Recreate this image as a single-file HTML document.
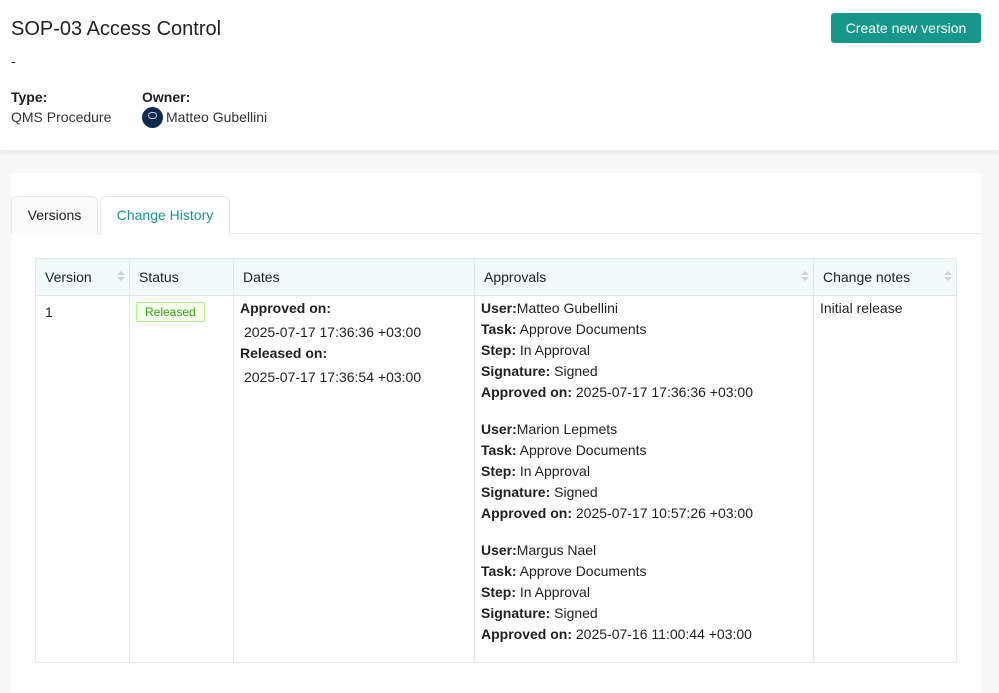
<!DOCTYPE html>
<html><head><style>
*{box-sizing:border-box;margin:0;padding:0}
body{width:999px;height:684px;overflow:hidden;background:#f7f7f7;font-family:"Liberation Sans",sans-serif;color:#1f1f1f;font-size:14px;position:relative}
.hdr{position:absolute;left:0;top:0;width:999px;height:150px;background:#fff;box-shadow:0 2px 6px rgba(0,0,0,.08)}
.abs{position:absolute;white-space:nowrap}
.btn{position:absolute;left:831px;top:13px;width:150px;height:30px;background:#16978a;color:#fff;border-radius:3px;font-size:14px;text-align:center;line-height:30px}
.card{position:absolute;left:11px;top:173px;width:970px;height:520px;background:#fff}
.tabs{position:absolute;left:11px;top:196px;width:970px;height:38px;border-bottom:1px solid #e8e8e8}
.tab{position:absolute;top:0;height:38px;border:1px solid #e8e8e8;border-bottom:none;border-radius:6px 6px 0 0;line-height:37px;font-size:14px;text-align:center}
table{position:absolute;left:35px;top:258px;border-collapse:collapse;font-size:14px}
th{background:#f1f9f9;height:37px;font-weight:normal;text-align:left;padding:0 9px;border:1px solid #e3e8e8;position:relative}
td{vertical-align:top;border:1px solid #e3e8e8;padding:6px 6px 0;height:367px}
.sort{position:absolute;right:8px;top:13px;width:0;height:0}
.sort:before{content:"";position:absolute;left:-4px;top:-1px;border:4px solid transparent;border-bottom:4px solid #cfcfcf;border-top:none}
.sort:after{content:"";position:absolute;left:-4px;top:5px;border:4px solid transparent;border-top:4px solid #cfcfcf;border-bottom:none}
.l{line-height:21px}
.g{margin-bottom:16px}
b{font-weight:bold}
.tag{display:inline-block;border:1px solid #b7eb8f;background:#f6ffed;color:#389e0d;font-size:12px;padding:0 8px;line-height:18px;border-radius:2px}
</style></head><body>
<div class="hdr"></div>
<div class="abs" style="left:11px;top:18px;font-size:20px;color:#222">SOP-03 Access Control</div>
<div class="abs" style="left:11px;top:53px;font-size:14px">-</div>
<div class="abs" style="left:11px;top:89px;font-weight:bold">Type:</div>
<div class="abs" style="left:11px;top:109px;color:#333">QMS Procedure</div>
<div class="abs" style="left:142px;top:89px;font-weight:bold">Owner:</div>
<div class="abs" style="left:142px;top:107px;width:21px;height:21px;border-radius:50%;background:#0f2a4f"><div style="position:absolute;left:6px;top:5px;width:9px;height:7px;border:1px solid #ccd;border-radius:4px"></div></div>
<div class="abs" style="left:166px;top:109px;color:#333">Matteo Gubellini</div>
<div class="btn">Create new version</div>
<div class="card"></div>
<div class="tabs">
<div class="tab" style="left:0;width:87px;background:#fafafa">Versions</div>
<div class="tab" style="left:89px;width:130px;background:#fff;color:#16978a;height:39px">Change History</div>
</div>
<table>
<tr><th style="width:94px">Version<span class="sort"></span></th><th style="width:104px">Status</th><th style="width:241px">Dates</th><th style="width:339px">Approvals<span class="sort"></span></th><th style="width:143px">Change notes<span class="sort"></span></th></tr>
<tr>
<td style="padding:8px 9px 0">1</td>
<td><span class="tag">Released</span></td>
<td class="l" style="padding-top:2px"><b>Approved on:</b><div style="padding:3px 4px 0">2025-07-17 17:36:36 +03:00</div><b>Released on:</b><div style="padding:3px 4px 0">2025-07-17 17:36:54 +03:00</div></td>
<td class="l" style="padding-top:2px">
<div class="g"><b>User:</b>Matteo Gubellini<br><b>Task:</b> Approve Documents<br><b>Step:</b> In Approval<br><b>Signature:</b> Signed<br><b>Approved on:</b> 2025-07-17 17:36:36 +03:00</div>
<div class="g"><b>User:</b>Marion Lepmets<br><b>Task:</b> Approve Documents<br><b>Step:</b> In Approval<br><b>Signature:</b> Signed<br><b>Approved on:</b> 2025-07-17 10:57:26 +03:00</div>
<div><b>User:</b>Margus Nael<br><b>Task:</b> Approve Documents<br><b>Step:</b> In Approval<br><b>Signature:</b> Signed<br><b>Approved on:</b> 2025-07-16 11:00:44 +03:00</div></td>
<td class="l" style="padding-top:2px">Initial release</td>
</tr></table>
</body></html>
